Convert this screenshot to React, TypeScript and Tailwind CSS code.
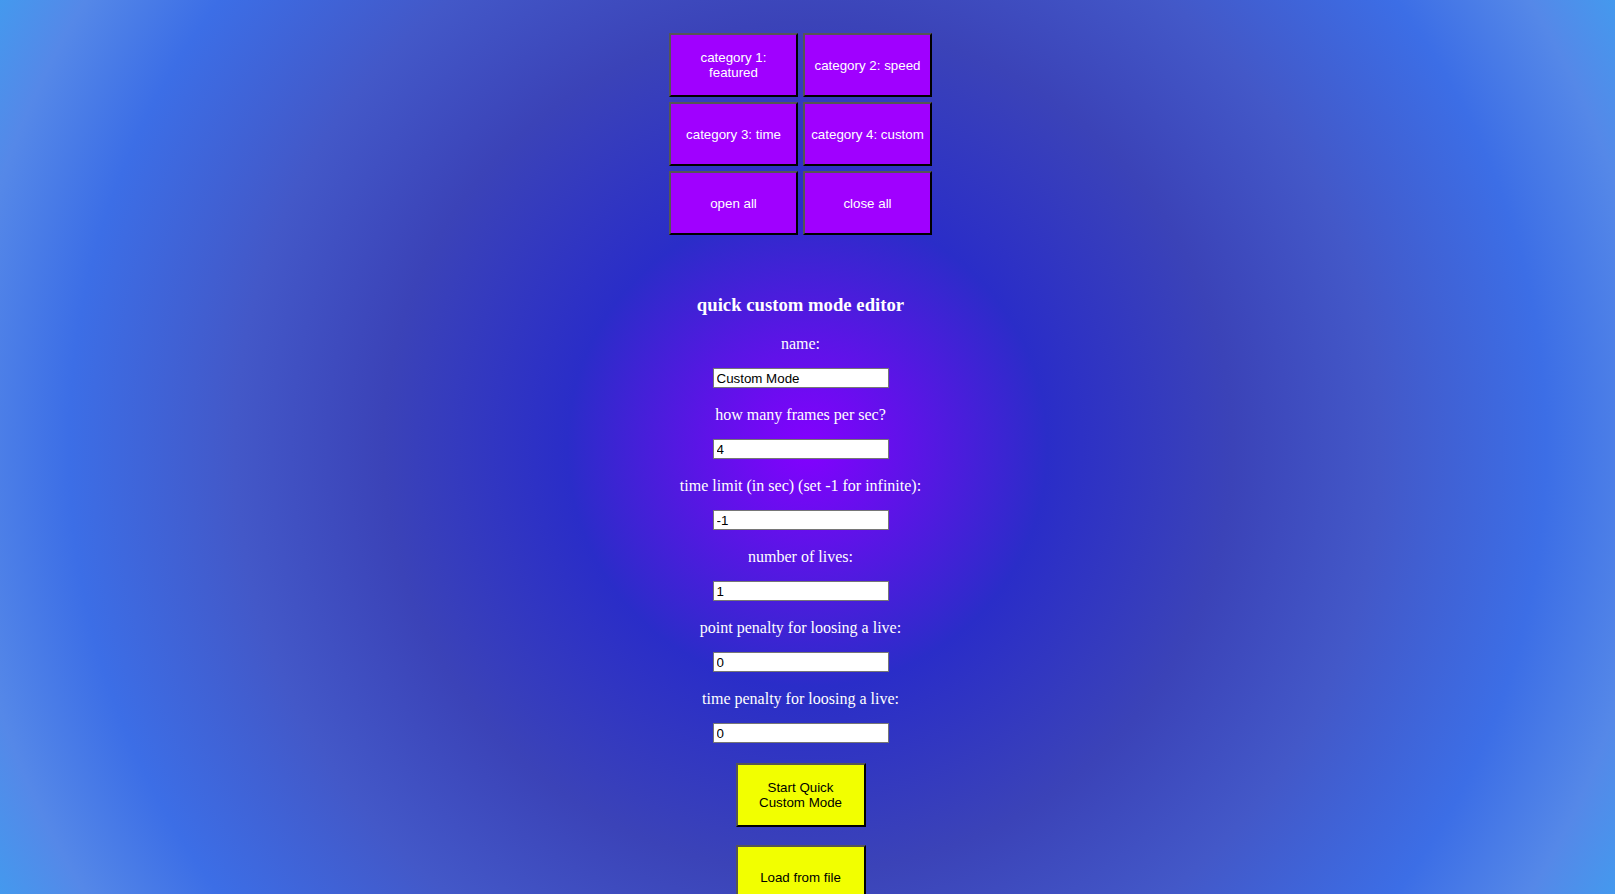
import React from 'react'

const categories = [
  'category 1: featured',
  'category 2: speed',
  'category 3: time',
  'category 4: custom',
  'open all',
  'close all',
]

const fields = [
  { label: 'how many frames per sec?', value: '4' },
  { label: 'time limit (in sec) (set -1 for infinite):', value: '-1' },
  { label: 'number of lives:', value: '1' },
  { label: 'point penalty for loosing a live:', value: '0' },
  { label: 'time penalty for loosing a live:', value: '0' },
]

export default function App() {
  return (
    <div className="w-full h-[894px] overflow-hidden bg-[radial-gradient(circle_farthest-corner_at_50%_50%,#8400ff_0%,#2a2dc8_26%,#3b43b8_46%,#4358c8_62%,#3c6ee6_80%,#5588e8_92%,#4499ee_100%)]">
      <div className="w-[1601px] flex flex-col items-center pt-[33px] font-['Liberation_Serif',serif] text-white">
        {/* category buttons */}
        <div className="grid grid-cols-[129px_129px] gap-[5px]">
          {categories.map((c) => (
            <button
              key={c}
              className="h-[64px] px-[6px] bg-[#a000ff] text-white text-[13.333px] leading-[15px] font-['Liberation_Sans',Arial,sans-serif] border-2 border-t-[#555555] border-l-[#555555] border-r-black border-b-black"
            >
              {c}
            </button>
          ))}
        </div>

        <h3 className="mt-[59px] text-[18.72px] leading-[22px] font-bold">quick custom mode editor</h3>

        <p className="mt-[18px] text-[16px] leading-[19px]">name:</p>
        <input
          defaultValue="Custom Mode"
          className="mt-[15px] w-[176px] h-[20px] bg-white border border-[#767676] pl-[3px] text-black text-[13.333px] font-['Liberation_Sans',Arial,sans-serif] outline-none"
        />

        {fields.map((f) => (
          <React.Fragment key={f.label}>
            <p className="mt-[17px] text-[16px] leading-[19px]">{f.label}</p>
            <input
              defaultValue={f.value}
              className="mt-[15px] w-[176px] h-[20px] bg-white border border-[#767676] pl-[3px] text-black text-[13.333px] font-['Liberation_Sans',Arial,sans-serif] outline-none"
            />
          </React.Fragment>
        ))}

        <button className="mt-[20px] w-[130px] h-[64px] px-[10px] bg-[#f2ff00] text-black text-[13.333px] leading-[15px] font-['Liberation_Sans',Arial,sans-serif] border-2 border-t-[#555555] border-l-[#555555] border-r-black border-b-black">
          Start Quick Custom Mode
        </button>
        <button className="mt-[18px] w-[130px] h-[64px] px-[10px] bg-[#f2ff00] text-black text-[13.333px] leading-[15px] font-['Liberation_Sans',Arial,sans-serif] border-2 border-t-[#555555] border-l-[#555555] border-r-black border-b-black">
          Load from file
        </button>
      </div>
    </div>
  )
}
